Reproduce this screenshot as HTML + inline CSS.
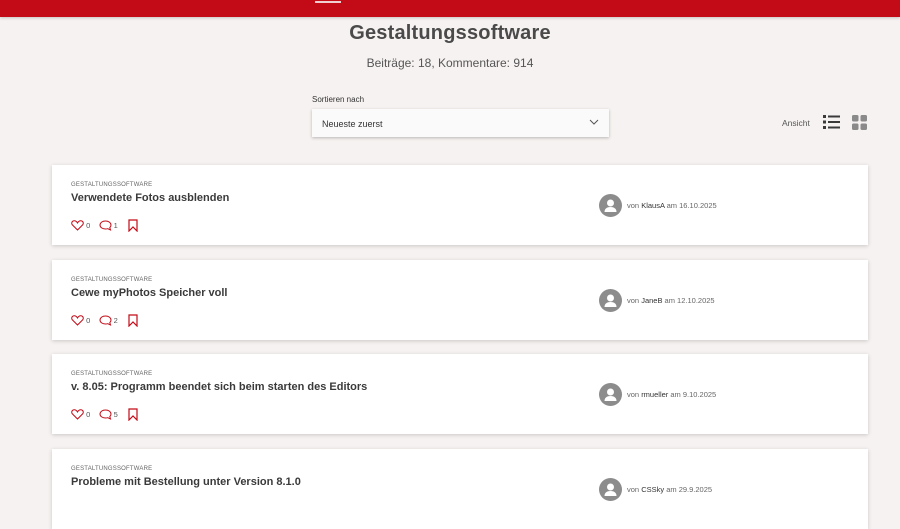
<!DOCTYPE html>
<html><head><meta charset="utf-8"><style>
*{box-sizing:border-box;margin:0;padding:0}
html,body{width:900px;height:485px;overflow:hidden;background:#f6f2f1;font-family:"Liberation Sans",sans-serif;color:#3a3a3a}
.top{position:absolute;left:0;top:0;width:900px;height:17px;background:#c30b17;box-shadow:0 1px 3px rgba(0,0,0,.2)}
.top i{position:absolute;left:315px;top:1px;width:26px;height:2px;background:#f0d0d0}
h1{position:absolute;top:22px;width:900px;text-align:center;font-size:20px;font-weight:bold;color:#4a4a4a;letter-spacing:.2px}
.sub{position:absolute;top:56px;width:900px;text-align:center;font-size:12px;color:#555}
.lbl{position:absolute;left:312px;top:95px;font-size:8px;color:#333}
.sel{position:absolute;left:312px;top:109px;width:297px;height:28px;background:#fafafa;box-shadow:0 1px 3px rgba(0,0,0,.25);font-size:9px;padding:10px 10px;color:#333}
.sel svg{position:absolute;right:10px;top:10px}
.ans{position:absolute;left:782px;top:118px;font-size:8.5px;color:#555}
.card{position:absolute;left:52px;width:816px;height:80px;background:#fff;box-shadow:0 1px 4px rgba(0,0,0,.18)}
.cat{position:absolute;left:19px;top:17px;font-size:6px;color:#666;letter-spacing:.2px}
.t{position:absolute;left:19px;top:27px;font-size:11px;font-weight:bold;color:#3a3a3a}
.ic{position:absolute;left:19px;top:54px;font-size:7.5px;color:#555;display:flex;align-items:center}
.ic svg{display:block}
.av{position:absolute;left:547px;top:29px;width:23px;height:23px;border-radius:50%;background:#8c8c8c;overflow:hidden}
.by{position:absolute;left:575px;top:36px;font-size:7.5px;color:#666}
.by b{font-weight:normal;color:#333}
</style></head><body>
<div class="top"><i></i></div>
<h1>Gestaltungssoftware</h1>
<div class="sub">Beiträge: 18, Kommentare: 914</div>
<div class="lbl">Sortieren nach</div>
<div class="sel">Neueste zuerst<svg width="10" height="6" viewBox="0 0 10 6"><path d="M1 1l4 4 4-4" fill="none" stroke="#555" stroke-width="1"/></svg></div>
<div class="ans">Ansicht</div>
<svg style="position:absolute;left:823px;top:115px" width="17" height="14" viewBox="0 0 17 14"><g fill="#3a3a3a"><rect x="0" y="0" width="3" height="3"/><rect x="5" y="0.5" width="12" height="2"/><rect x="0" y="5.5" width="3" height="3"/><rect x="5" y="6" width="12" height="2"/><rect x="0" y="11" width="3" height="3"/><rect x="5" y="11.5" width="12" height="2"/></g></svg>
<svg style="position:absolute;left:852px;top:115px" width="15" height="15" viewBox="0 0 15 15"><g fill="#8a8a8a"><rect x="0" y="0" width="6.5" height="6.5" rx="1.5"/><rect x="8.5" y="0" width="6.5" height="6.5" rx="1.5"/><rect x="0" y="8.5" width="6.5" height="6.5" rx="1.5"/><rect x="8.5" y="8.5" width="6.5" height="6.5" rx="1.5"/></g></svg>

<div class="card" style="top:165px">
<div class="cat">GESTALTUNGSSOFTWARE</div><div class="t">Verwendete Fotos ausblenden</div>
<div class="ic"><svg width="13" height="11" viewBox="0 0 13 11"><path d="M6.5 10L1.5 5C0 3.5 0.8 1 3 0.8 4.5 0.7 5.8 1.8 6.5 3 7.2 1.8 8.5 0.7 10 0.8 12.2 1 13 3.5 11.5 5Z" fill="none" stroke="#c30b17" stroke-width="1"/></svg>&nbsp;0&nbsp;&nbsp;&nbsp;&nbsp;<svg width="13" height="11" viewBox="0 0 13 11"><path d="M6.5 1C3.5 1 1 2.6 1 5s2.5 4 5.5 4c.8 0 1.5-.1 2.2-.3L11.5 10 10.8 7.6C11.6 6.9 12 6 12 5 12 2.6 9.5 1 6.5 1Z" fill="none" stroke="#c30b17" stroke-width="1"/></svg>&nbsp;1&nbsp;&nbsp;&nbsp;&nbsp;&nbsp;<svg width="10" height="13" viewBox="0 0 10 13"><path d="M1 1h8v11L5 8 1 12Z" fill="none" stroke="#c30b17" stroke-width="1.2"/></svg></div>
<div class="av"><svg width="23" height="23" viewBox="0 0 23 23"><circle cx="11.5" cy="9" r="3.5" fill="#fff"/><path d="M5.5 18c0-3.5 2.7-5 6-5s6 1.5 6 5Z" fill="#fff"/></svg></div>
<div class="by">von <b>KlausA</b> am 16.10.2025</div></div>

<div class="card" style="top:260px">
<div class="cat">GESTALTUNGSSOFTWARE</div><div class="t">Cewe myPhotos Speicher voll</div>
<div class="ic"><svg width="13" height="11" viewBox="0 0 13 11"><path d="M6.5 10L1.5 5C0 3.5 0.8 1 3 0.8 4.5 0.7 5.8 1.8 6.5 3 7.2 1.8 8.5 0.7 10 0.8 12.2 1 13 3.5 11.5 5Z" fill="none" stroke="#c30b17" stroke-width="1"/></svg>&nbsp;0&nbsp;&nbsp;&nbsp;&nbsp;<svg width="13" height="11" viewBox="0 0 13 11"><path d="M6.5 1C3.5 1 1 2.6 1 5s2.5 4 5.5 4c.8 0 1.5-.1 2.2-.3L11.5 10 10.8 7.6C11.6 6.9 12 6 12 5 12 2.6 9.5 1 6.5 1Z" fill="none" stroke="#c30b17" stroke-width="1"/></svg>&nbsp;2&nbsp;&nbsp;&nbsp;&nbsp;&nbsp;<svg width="10" height="13" viewBox="0 0 10 13"><path d="M1 1h8v11L5 8 1 12Z" fill="none" stroke="#c30b17" stroke-width="1.2"/></svg></div>
<div class="av"><svg width="23" height="23" viewBox="0 0 23 23"><circle cx="11.5" cy="9" r="3.5" fill="#fff"/><path d="M5.5 18c0-3.5 2.7-5 6-5s6 1.5 6 5Z" fill="#fff"/></svg></div>
<div class="by">von <b>JaneB</b> am 12.10.2025</div></div>

<div class="card" style="top:354px">
<div class="cat">GESTALTUNGSSOFTWARE</div><div class="t">v. 8.05: Programm beendet sich beim starten des Editors</div>
<div class="ic"><svg width="13" height="11" viewBox="0 0 13 11"><path d="M6.5 10L1.5 5C0 3.5 0.8 1 3 0.8 4.5 0.7 5.8 1.8 6.5 3 7.2 1.8 8.5 0.7 10 0.8 12.2 1 13 3.5 11.5 5Z" fill="none" stroke="#c30b17" stroke-width="1"/></svg>&nbsp;0&nbsp;&nbsp;&nbsp;&nbsp;<svg width="13" height="11" viewBox="0 0 13 11"><path d="M6.5 1C3.5 1 1 2.6 1 5s2.5 4 5.5 4c.8 0 1.5-.1 2.2-.3L11.5 10 10.8 7.6C11.6 6.9 12 6 12 5 12 2.6 9.5 1 6.5 1Z" fill="none" stroke="#c30b17" stroke-width="1"/></svg>&nbsp;5&nbsp;&nbsp;&nbsp;&nbsp;&nbsp;<svg width="10" height="13" viewBox="0 0 10 13"><path d="M1 1h8v11L5 8 1 12Z" fill="none" stroke="#c30b17" stroke-width="1.2"/></svg></div>
<div class="av"><svg width="23" height="23" viewBox="0 0 23 23"><circle cx="11.5" cy="9" r="3.5" fill="#fff"/><path d="M5.5 18c0-3.5 2.7-5 6-5s6 1.5 6 5Z" fill="#fff"/></svg></div>
<div class="by">von <b>rmueller</b> am 9.10.2025</div></div>

<div class="card" style="top:449px">
<div class="cat">GESTALTUNGSSOFTWARE</div><div class="t">Probleme mit Bestellung unter Version 8.1.0</div>
<div class="av"><svg width="23" height="23" viewBox="0 0 23 23"><circle cx="11.5" cy="9" r="3.5" fill="#fff"/><path d="M5.5 18c0-3.5 2.7-5 6-5s6 1.5 6 5Z" fill="#fff"/></svg></div>
<div class="by">von <b>CSSky</b> am 29.9.2025</div></div>
</body></html>
